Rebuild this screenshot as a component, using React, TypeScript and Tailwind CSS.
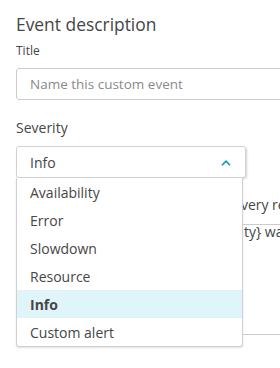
import React from "react";

const font = { fontFamily: '"Open Sans", "Noto Sans", sans-serif' };

export default function App() {
  const items = ["Availability", "Error", "Slowdown", "Resource", "Info", "Custom alert"];
  return (
    <div
      className="w-[280px] h-[368px] overflow-hidden bg-white text-[#454646] relative"
      style={font}
    >
      <div className="pl-4 pt-3 w-[400px]">
        <h2 className="text-[17.4px] leading-[24px] font-normal">Event description</h2>
        <div className="mt-[7px] text-[12px] leading-[16px]">Title</div>
        <div className="mt-[9px] h-[32px] w-[340px] border border-[#cccccc] rounded-[3px] flex items-center pl-[13px] text-[13.5px] text-[#8a8a8a]">
          Name this custom event
        </div>
        <div className="mt-[18px] text-[14px] leading-[20px]">Severity</div>
        <div className="relative mt-2 w-[230px]">
          <div className="h-[32px] border border-[#d2d2d2] rounded-[3px] shadow-[1px_1px_2px_rgba(0,0,0,0.18)] flex items-center justify-between pl-[13px] pr-[14px] text-[14px]">
            <span>Info</span>
            <svg width="10" height="6" viewBox="0 0 10 6" className="mt-[1px]">
              <path d="M1 5.2 L5 1.2 L9 5.2" fill="none" stroke="#00a1b2" strokeWidth="1.6" />
            </svg>
          </div>
          <ul className="absolute left-0 top-[32px] w-[227px] bg-white border border-t-0 border-[#d0d0d0] rounded-b-[3px] shadow-[0_1px_2px_rgba(0,0,0,0.12)] z-10">
            {items.map((it) => (
              <li
                key={it}
                className={
                  "h-[28px] flex items-center pl-[13px] text-[14px] " +
                  (it === "Info" ? "bg-[#e0f5f9] font-bold" : "")
                }
              >
                {it}
              </li>
            ))}
          </ul>
        </div>
        <div className="w-[340px] text-[14px]">
          <div className="h-[47px] border-b border-[#cccccc] pt-[17px] leading-[20px] pl-[147px] whitespace-nowrap">
            Trigger on every request
          </div>
          <div className="h-[113px] border-b border-[#cccccc] whitespace-nowrap pl-[184px] leading-[20px]">
            <div className="-mt-[3px]">{"{severity} was raised"}</div>
          </div>
        </div>
      </div>
    </div>
  );
}
